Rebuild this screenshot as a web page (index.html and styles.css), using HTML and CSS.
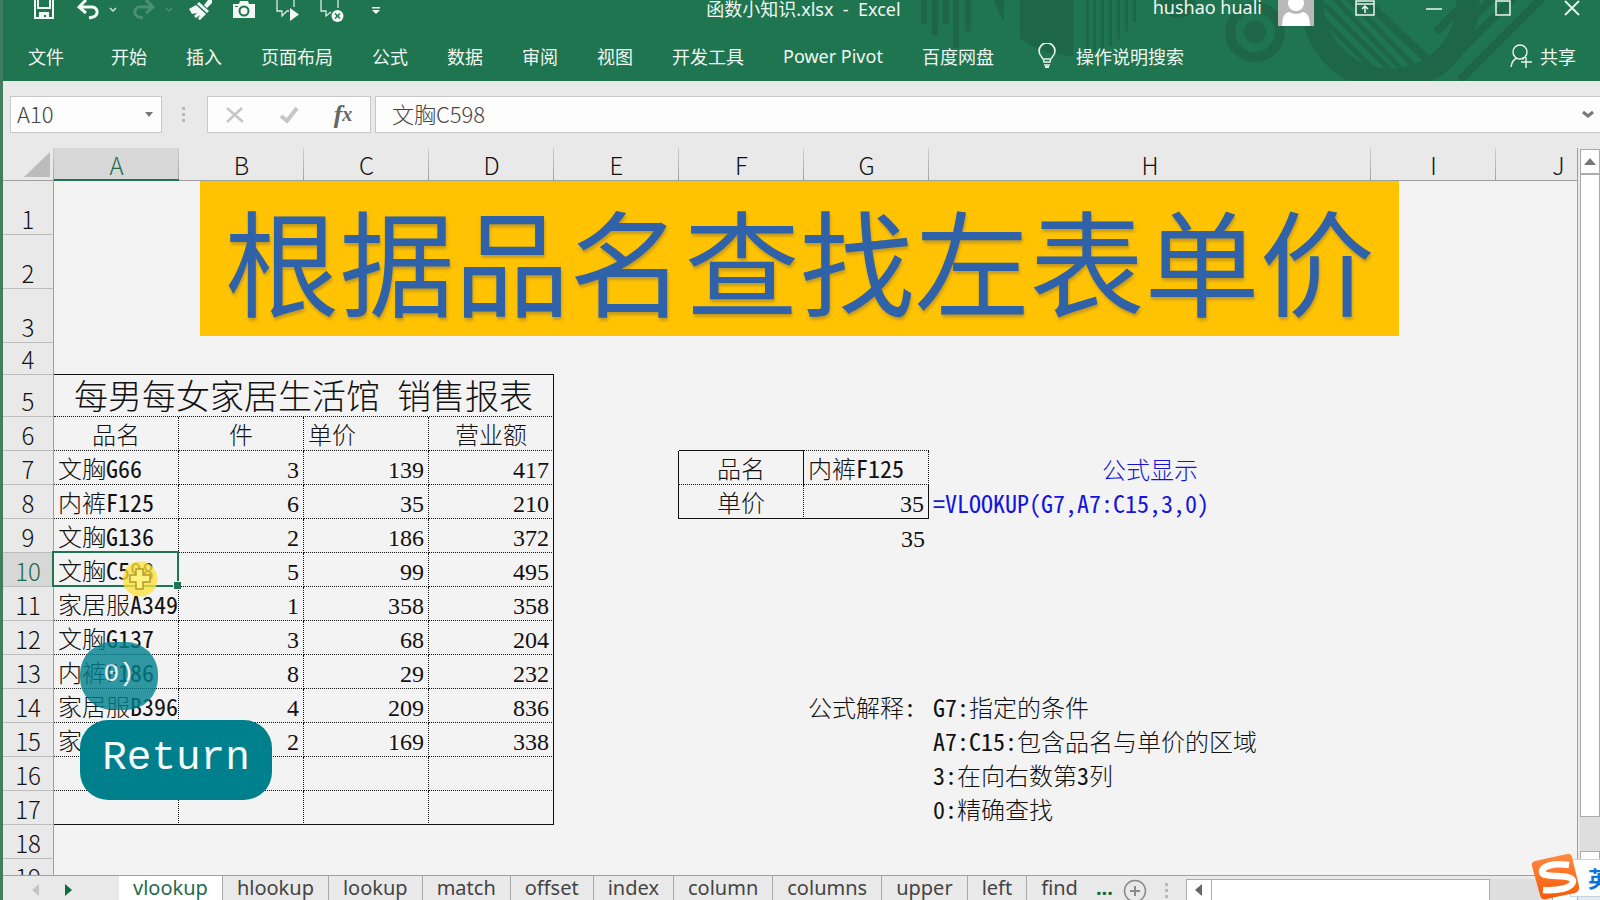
FILE: index.html
```html
<!DOCTYPE html>
<html lang="zh-CN">
<head>
<meta charset="utf-8">
<title>函数小知识.xlsx - Excel</title>
<link rel="stylesheet" href="styles.css">
</head>
<body>
<div class="app">
  <header class="top">
    <svg class="deco" viewBox="0 0 700 81" width="700" height="81" aria-hidden="true">
      <g fill="#1e6648">
        <path d="M21 0h6v24h-6zM32 0h6v35h-6zM43 0h6v24h-6zM53 0h6v48h-6zM65 0h6v31h-6z"/>
        <path d="M94 0h10v22q-6-10-10-22z"/>
        <path d="M120 0h53v56q-35-2-53-18z"/>
        <path d="M186 0h3v54h-3zM193 0h3v52h-3zM201 0h3v50h-3zM209 0h3v46h-3zM217 0h3v39h-3zM225 0h3v31h-3zM233 0h3v22h-3z"/>
        <circle cx="278" cy="0" r="18"/>
        <circle cx="355" cy="32" r="11"/>
      </g>
      <circle cx="355" cy="32" r="25" fill="none" stroke="#1e6648" stroke-width="10"/>
      <circle cx="490" cy="2" r="78" fill="none" stroke="#1e6648" stroke-width="23"/>
      <g stroke="#1e6648" fill="none">
        <path stroke-width="5" d="M420 16l58 58M424 4l68 68M432 -4l70 74M444 -6l70 72"/>
        <path stroke-width="8" d="M454 -10l78 74"/>
        <path stroke-width="8" d="M536 32l34-34M559 32l36-36M545 66l72-72M560 80l88-88"/>
      </g>
    </svg>
    <div class="titlebar">
      <div class="qat">
        <button class="tool" aria-label="保存"><svg width="20" height="20" viewBox="0 0 20 20"><path fill="none" stroke="#f2f8f5" stroke-width="2" d="M1 0v18h18V0M4 0v8h12V0"/><path fill="#f2f8f5" d="M5 12h10v7h-3v-4h-2v4H5z"/></svg></button>
        <button class="tool" aria-label="撤消"><svg width="22" height="20" viewBox="0 0 22 20"><path fill="none" stroke="#f2f8f5" stroke-width="3" d="M2 7h12a5 5 0 0 1 2 10l-4 1M9 0L2 7l7 6"/></svg></button>
        <button class="arrow" aria-label="撤消列表"><svg width="8" height="20" viewBox="0 0 8 20"><path fill="none" stroke="#cfe3d9" stroke-width="1.5" d="M1 8l3 3 3-3"/></svg></button>
        <button class="tool" aria-label="恢复"><svg width="22" height="20" viewBox="0 0 22 20"><path fill="none" stroke="#4b9072" stroke-width="3" d="M20 7H8a5 5 0 0 0-2 10l4 1M13 0l7 7-7 6"/></svg></button>
        <button class="arrow" aria-label="恢复列表"><svg width="8" height="20" viewBox="0 0 8 20"><path fill="none" stroke="#4b9072" stroke-width="1.5" d="M1 8l3 3 3-3"/></svg></button>
        <button class="tool" aria-label="格式刷"><svg width="24" height="20" viewBox="0 0 24 20"><path fill="#f2f8f5" d="M20 0h4v3l-5 5-3-3zM11 2l10 9-2 2L9 4zM8 5l10 9-6 6-2-1 2-4-4 3-2-2 3-3-5 1-3-5z"/></svg></button>
        <button class="tool" aria-label="照相机"><svg width="22" height="20" viewBox="0 0 22 20"><path fill="#f2f8f5" d="M6 4l1-3h8l1 3h6v14H0V4z"/><circle cx="11" cy="11" r="4.5" fill="none" stroke="#1f754f" stroke-width="2"/><path fill="#1f754f" d="M2 6h3v1H2z"/></svg></button>
        <button class="tool" aria-label="显示批注"><svg width="24" height="22" viewBox="0 0 24 22"><path fill="none" stroke="#dcebe4" stroke-width="1.3" d="M1 0v11h5v5l5-5h2M18 0v7"/><path fill="#f2f8f5" d="M14 8l9 6.500-9 6.500z"/></svg></button>
        <button class="tool" aria-label="删除批注"><svg width="24" height="22" viewBox="0 0 24 22"><path fill="none" stroke="#dcebe4" stroke-width="1.3" d="M1 0v11h5v5l5-4M18 0v8"/><circle cx="17.500" cy="16" r="6" fill="#f2f8f5"/><path stroke="#1f754f" stroke-width="1.500" d="M15 13.500l5 5M20 13.500l-5 5"/></svg></button>
        <button class="tool" aria-label="自定义快速访问工具栏"><svg width="8" height="20" viewBox="0 0 8 20"><path fill="#f2f8f5" d="M0 7h8v1.500H0zM0 10h8l-4 4z"/></svg></button>
      </div>
      <div class="doc-title">函数小知识.xlsx&nbsp; -&nbsp; Excel</div>
      <div class="account">
        <span class="user">hushao huali</span>
        <svg class="avatar" width="36" height="26" viewBox="0 0 36 26"><path fill="#b9b9b9" d="M0 0h36v26H0z"/><circle cx="18" cy="3" r="8" fill="#fff"/><path fill="#fff" d="M4 26q0-13 7-14 7 4 14 0 7 1 7 14z"/></svg>
        <button class="win" aria-label="功能区显示选项"><svg width="20" height="18" viewBox="0 0 20 18"><path fill="none" stroke="#eaf4ef" stroke-width="1.500" d="M1 1h18v14H1zM1 4h18M10 13V7M7 9l3-3 3 3"/></svg></button>
        <button class="win" aria-label="最小化"><svg width="16" height="18" viewBox="0 0 16 18"><path stroke="#eaf4ef" stroke-width="1.500" d="M0 9h16"/></svg></button>
        <button class="win" aria-label="最大化"><svg width="16" height="18" viewBox="0 0 16 18"><path fill="none" stroke="#eaf4ef" stroke-width="1.500" d="M1 1h14v14H1z"/></svg></button>
        <button class="win" aria-label="关闭"><svg width="16" height="18" viewBox="0 0 16 18"><path stroke="#eaf4ef" stroke-width="1.800" d="M1 1l14 14M15 1L1 15"/></svg></button>
      </div>
    </div>
    <nav class="ribbon">
      <button class="file">文件</button>
      <button>开始</button>
      <button>插入</button>
      <button>页面布局</button>
      <button>公式</button>
      <button>数据</button>
      <button>审阅</button>
      <button>视图</button>
      <button>开发工具</button>
      <button>Power Pivot</button>
      <button>百度网盘</button>
      <button class="tell"><svg width="18" height="26" viewBox="0 0 18 26"><path fill="none" stroke="#eaf4ef" stroke-width="1.600" d="M6 19c0-5-5-5-5-11a8 8 0 0 1 16 0c0 6-5 6-5 11zM6 16h6M6 22h6"/><path fill="#eaf4ef" d="M7 23h4v2H7z"/></svg>操作说明搜索</button>
      <button class="share"><svg width="22" height="24" viewBox="0 0 22 24"><circle cx="10" cy="8" r="7" fill="none" stroke="#eaf4ef" stroke-width="1.400"/><path fill="none" stroke="#eaf4ef" stroke-width="1.400" d="M1 23q1-7 6-9M12 14l2 1M16 13v11M11 18h11"/></svg>共享</button>
    </nav>
  </header>

  <div class="formula-bar">
    <div class="name-box">
      <input aria-label="名称框" value="A10">
      <button aria-label="名称列表"><svg width="8" height="5" viewBox="0 0 8 5"><path fill="#777" d="M0 0h8L4 5z"/></svg></button>
    </div>
    <svg class="grip" width="4" height="16" viewBox="0 0 4 16"><path fill="#b8b8b8" d="M0 0h3v3H0zM0 6h3v3H0zM0 12h3v3H0z"/></svg>
    <div class="fx-box">
      <button aria-label="取消"><svg width="18" height="16" viewBox="0 0 18 16"><path stroke="#c6c6c6" stroke-width="2.500" d="M1 1l16 14M16 1L1 15"/></svg></button>
      <button aria-label="输入"><svg width="20" height="18" viewBox="0 0 20 18"><path fill="none" stroke="#c6c6c6" stroke-width="4" d="M2 10l6 5L18 2"/></svg></button>
      <button class="fx" aria-label="插入函数">f<small>x</small></button>
    </div>
    <div class="formula">
      <input aria-label="编辑栏" value="文胸C598">
      <button aria-label="展开编辑栏"><svg width="12" height="9" viewBox="0 0 12 9"><path fill="none" stroke="#777" stroke-width="3" d="M1 2l5 4 5-4"/></svg></button>
    </div>
  </div>

  <main class="work">
    <div class="sheet">
      <table class="grid">
        <colgroup><col class="c-num"><col><col><col><col><col><col><col><col class="c-wide"><col><col></colgroup>
        <thead>
          <tr><th class="corner"><svg width="26" height="25" viewBox="0 0 26 25"><path fill="#bcbcbc" d="M26 0v25H0z"/></svg></th><th class="on">A</th><th>B</th><th>C</th><th>D</th><th>E</th><th>F</th><th>G</th><th>H</th><th>I</th><th>J</th></tr>
        </thead>
        <tbody>
          <tr class="tall"><th>1</th><td colspan="10"></td></tr>
          <tr class="tall"><th>2</th><td colspan="10"></td></tr>
          <tr class="tall"><th>3</th><td colspan="10"></td></tr>
          <tr class="short"><th>4</th><td colspan="4" class="bb"></td><td colspan="6"></td></tr>
          <tr class="head"><th>5</th><td colspan="4" class="caption db rb">每男每女家居生活馆&nbsp; 销售报表</td><td colspan="6"></td></tr>
          <tr><th>6</th><td class="mid dr db">品名</td><td class="mid dr db">件</td><td class="dr db">单价</td><td class="mid rb db">营业额</td><td></td><td class="bb"></td><td class="db"></td><td></td><td></td><td></td></tr>
          <tr><th>7</th><td class="dr db">文胸<span class="code">G66</span></td><td class="num dr db">3</td><td class="num dr db">139</td><td class="num rb db">417</td><td class="rb"></td><td class="mid rb db">品名</td><td class="dr db">内裤<span class="code">F125</span></td><td class="mid blue">公式显示</td><td></td><td></td></tr>
          <tr><th>8</th><td class="dr db">内裤<span class="code">F125</span></td><td class="num dr db">6</td><td class="num dr db">35</td><td class="num rb db">210</td><td class="rb"></td><td class="mid dr bb">单价</td><td class="num rb bb">35</td><td class="blue"><span class="code">=VLOOKUP(G7,A7:C15,3,0)</span></td><td></td><td></td></tr>
          <tr><th>9</th><td class="dr db">文胸<span class="code">G136</span></td><td class="num dr db">2</td><td class="num dr db">186</td><td class="num rb db">372</td><td></td><td></td><td class="num">35</td><td></td><td></td><td></td></tr>
          <tr><th class="on">10</th><td class="dr db active">文胸<span class="code">C598</span><span class="selection"></span><svg class="cursor" width="36" height="36" viewBox="0 0 36 36"><circle cx="18" cy="18" r="17.500" fill="#ffe23c" fill-opacity=".78"/><path fill="#fff27e" stroke="#b39b2c" stroke-width="1.500" d="M14 8h7v6h7v7h-7v7h-7v-7H8v-7h6z"/></svg></td><td class="num dr db">5</td><td class="num dr db">99</td><td class="num rb db">495</td><td></td><td></td><td></td><td></td><td></td><td></td></tr>
          <tr><th>11</th><td class="dr db">家居服<span class="code">A349</span></td><td class="num dr db">1</td><td class="num dr db">358</td><td class="num rb db">358</td><td></td><td></td><td></td><td></td><td></td><td></td></tr>
          <tr><th>12</th><td class="dr db">文胸<span class="code">G137</span></td><td class="num dr db">3</td><td class="num dr db">68</td><td class="num rb db">204</td><td></td><td></td><td></td><td></td><td></td><td></td></tr>
          <tr><th>13</th><td class="dr db">内裤<span class="code">F186</span></td><td class="num dr db">8</td><td class="num dr db">29</td><td class="num rb db">232</td><td></td><td></td><td></td><td></td><td></td><td></td></tr>
          <tr><th>14</th><td class="dr db">家居服<span class="code">B396</span></td><td class="num dr db">4</td><td class="num dr db">209</td><td class="num rb db">836</td><td></td><td></td><td>公式解释<span class="code">:</span></td><td><span class="code">G7:</span>指定的条件</td><td></td><td></td></tr>
          <tr><th>15</th><td class="dr db">家</td><td class="num dr db">2</td><td class="num dr db">169</td><td class="num rb db">338</td><td></td><td></td><td></td><td><span class="code">A7:C15:</span>包含品名与单价的区域</td><td></td><td></td></tr>
          <tr><th>16</th><td class="dr db"></td><td class="dr db"></td><td class="dr db"></td><td class="rb db"></td><td></td><td></td><td></td><td><span class="code">3:</span>在向右数第<span class="code">3</span>列</td><td></td><td></td></tr>
          <tr><th>17</th><td class="dr bb"></td><td class="dr bb"></td><td class="dr bb"></td><td class="rb bb"></td><td></td><td></td><td></td><td><span class="code">0:</span>精确查找</td><td></td><td></td></tr>
          <tr><th>18</th><td colspan="10"></td></tr>
          <tr><th>19</th><td colspan="10"></td></tr>
        </tbody>
      </table>
      <div class="banner">根据品名查找左表单价</div>
      <div class="key key-fading">0)</div>
      <div class="key key-return">Return</div>
    </div>
    <div class="vscroll">
      <button aria-label="向上滚动"><svg width="12" height="7" viewBox="0 0 12 7"><path fill="#777" d="M6 0l6 7H0z"/></svg></button>
      <div class="vthumb"></div>
      <div class="vtrack"></div>
      <button aria-label="向下滚动"></button>
    </div>
  </main>

  <footer class="tabs">
    <div class="tab-nav">
      <button aria-label="上一张"><svg width="7" height="12" viewBox="0 0 7 12"><path fill="#c4c4c4" d="M7 0v12L0 6z"/></svg></button>
      <button aria-label="下一张"><svg width="7" height="12" viewBox="0 0 7 12"><path fill="#0f6b41" d="M0 0v12l7-6z"/></svg></button>
    </div>
    <button class="tab current">vlookup</button>
    <button class="tab">hlookup</button>
    <button class="tab">lookup</button>
    <button class="tab">match</button>
    <button class="tab">offset</button>
    <button class="tab">index</button>
    <button class="tab">column</button>
    <button class="tab">columns</button>
    <button class="tab">upper</button>
    <button class="tab">left</button>
    <button class="tab last">find</button>
    <button class="more">...</button>
    <button class="add" aria-label="新工作表"><svg width="24" height="24" viewBox="0 0 24 24"><circle cx="12" cy="12" r="10.500" fill="none" stroke="#8a8a8a" stroke-width="1.500"/><path stroke="#8a8a8a" stroke-width="2" d="M7 12h10M12 7v10"/></svg></button>
    <svg class="grip" width="4" height="16" viewBox="0 0 4 16"><path fill="#b8b8b8" d="M0 0h3v3H0zM0 6h3v3H0zM0 12h3v3H0z"/></svg>
    <div class="hscroll">
      <button aria-label="向左滚动"><svg width="7" height="12" viewBox="0 0 7 12"><path fill="#666" d="M7 0v12L0 6z"/></svg></button>
      <div class="hthumb"></div>
      <div class="htrack"></div>
      <button aria-label="向右滚动"></button>
    </div>
  </footer>

  <div class="ime">
    <svg class="ime-logo" width="50" height="50" viewBox="0 0 50 50"><defs><linearGradient id="o" x1="0" y1="0" x2="0" y2="1"><stop offset="0" stop-color="#ff8a45"/><stop offset="1" stop-color="#f65a05"/></linearGradient></defs><path fill="url(#o)" d="M4 9L36 2q4-1 5 3l7 29q1 5-4 7L15 47q-5 1-6-4L1 14q-1-4 3-5z"/><path fill="none" stroke="#fff" stroke-width="6.500" d="M38 13C22 11 11 14 11 20c0 7 30 1 31 9 0 7-15 10-30 9"/></svg>
    <span class="ime-mode">英</span>
  </div>
</div>
</body>
</html>
```
FILE: styles.css
```css
* { box-sizing: border-box; }

body {
  margin: 0;
  background: #e9e9e9;
  font-family: "Noto Sans", "Noto Sans CJK SC", sans-serif;
}

button, input {
  margin: 0;
  padding: 0;
  border: 0;
  background: none;
  font: inherit;
  color: inherit;
}

button { display: flex; align-items: center; justify-content: center; }
svg { display: block; flex: none; }

.app {
  position: relative;
  display: flex;
  flex-direction: column;
  height: 100vh;
  overflow: hidden;
  border-left: 3px solid #3f7d5c;
}

/* Title bar and ribbon */
.top {
  position: relative;
  flex: none;
  overflow: hidden;
  background: #1f754f;
  color: #f0f7f3;
  font-size: 18px;
}

.deco { position: absolute; top: 0; right: 0; }

.titlebar {
  position: relative;
  display: grid;
  grid-template-columns: 1fr auto 1fr;
  height: 34px;
  line-height: 18px;
}

.doc-title { padding-left: 4px; }
.qat { display: flex; align-items: flex-start; padding-left: 16px; }
.tool { width: 38px; margin-left: 6px; }
.arrow { width: 12px; }

.account {
  display: flex;
  align-items: flex-start;
  justify-content: flex-end;
  margin-right: -6px;
}

.user { line-height: 14px; }
.avatar { margin: 0 16px; }
.win { width: 69px; }

.ribbon {
  position: relative;
  display: flex;
  align-items: center;
  gap: 39px;
  height: 47px;
  padding: 0 24px 4px 25px;
  white-space: nowrap;
}

.file { margin-right: 8px; }
.tell { gap: 20px; margin-left: 5px; }
.share { gap: 8px; margin-left: auto; }

/* Formula bar */
.formula-bar {
  display: flex;
  flex: none;
  align-items: center;
  height: 67px;
  padding: 0 0 0 7px;
  color: #444;
  font-family: "Noto Sans CJK SC", sans-serif;
  font-size: 22px;
  font-weight: 300;
}

.name-box, .fx-box, .formula {
  display: flex;
  align-items: center;
  height: 37px;
  border: 1px solid #c8c8c8;
  background: #fdfdfd;
}

.name-box { width: 152px; padding: 0 8px 0 6px; }
.formula-bar input { flex: 1; min-width: 0; padding-bottom: 4px; }
.grip { margin: 0 21px 0 20px; }
.fx-box { width: 164px; margin-right: 4px; }
.fx-box button { flex: 1; }
.fx { color: #666; font: italic bold 26px "Liberation Serif", serif; }
.fx small { font-size: 20px; }
.formula { flex: 1; padding: 0 6px 0 16px; border-right: 0; }

/* Worksheet */
.work { display: flex; flex: 1; min-height: 0; }

.sheet {
  position: relative;
  flex: 1;
  min-width: 0;
  overflow: hidden;
  border-right: 1px solid #9f9f9f;
  border-bottom: 1px solid #9f9f9f;
  background: #f3f3f3;
}

.grid {
  width: 1618px;
  table-layout: fixed;
  border-collapse: separate;
  border-spacing: 0;
  color: #111;
  font-family: "Liberation Serif", "Noto Sans CJK SC", serif;
  font-size: 24px;
  font-weight: 300;
  line-height: 28px;
}

.grid col { width: 125px; }
.grid .c-num { width: 51px; }
.grid .c-wide { width: 442px; }

.grid th {
  padding: 0;
  font-family: "Noto Sans CJK SC", sans-serif;
  font-weight: 300;
  line-height: 30px;
  text-align: center;
  vertical-align: bottom;
}

.grid thead th {
  height: 33px;
  border-bottom: 1px solid #9f9f9f;
  background: linear-gradient(#d0d0d0, #a0a0a0) right / 1px 100% no-repeat #e9e9e9;
}

.grid thead .corner { padding: 0 4px 3px 0; }
.corner svg { margin-left: auto; }

.grid thead .on {
  border-bottom: 2px solid #1f754f;
  background-color: #d7d7d7;
  color: #1f6b4a;
  line-height: 28px;
}

.grid tbody th {
  border-right: 1px solid #9f9f9f;
  border-bottom: 1px solid #bdbdbd;
  background: #e9e9e9;
}

.grid tbody .on { background: #d7d7d7; color: #1f6b4a; }

.grid tbody tr { height: 34px; }
.grid tbody .tall { height: 54px; }
.grid tbody .short { height: 32px; }
.grid tbody .head { height: 42px; }

.grid td {
  padding: 0 4px 0 4px;
  border: 0 solid #111;
  vertical-align: bottom;
  white-space: nowrap;
}

.grid .bb { border-bottom: 1px solid #111; }
.grid .rb { border-right: 1px solid #111; }
.grid .db { border-bottom: 1px dotted #111; }
.grid .dr { border-right: 1px dotted #111; }
.grid .mid { text-align: center; }
.grid .num { text-align: right; }
.grid .blue { color: #1414dc; }
.grid .caption { font-size: 34px; line-height: 36px; text-align: center; }
.code { font-family: "Noto Sans Mono CJK SC", "Liberation Mono", monospace; line-height: 20px; }

.active { position: relative; }

.selection {
  position: absolute;
  inset: -2px -1px -1px -2px;
  border: 2px solid #1f754f;
}

.selection::after {
  position: absolute;
  right: -4px;
  bottom: -4px;
  width: 7px;
  height: 7px;
  border: 1px solid #f3f3f3;
  border-width: 1px 0 0 1px;
  background: #1f754f;
  content: "";
}

.cursor { position: absolute; top: 8px; left: 68px; }

.banner {
  position: absolute;
  top: 33px;
  left: 197px;
  width: 1199px;
  height: 155px;
  background: #ffc303;
  color: #2f62a8;
  font-family: "Noto Sans CJK SC", sans-serif;
  font-size: 115px;
  font-weight: 400;
  line-height: 155px;
  text-align: center;
  text-shadow: 1px 3px 3px #c89c1c;
  white-space: nowrap;
}

.key {
  position: absolute;
  left: 77px;
  background: #00808d;
  color: #f4fbfb;
  font-family: "Liberation Mono", monospace;
  text-align: center;
}

.key-fading {
  top: 494px;
  width: 78px;
  height: 68px;
  border-radius: 32px;
  font-size: 26px;
  line-height: 64px;
  opacity: .8;
}

.key-return {
  top: 572px;
  width: 192px;
  height: 80px;
  border-radius: 28px;
  font-size: 41px;
  line-height: 76px;
}

/* Scroll bars */
.vscroll {
  display: flex;
  flex: none;
  flex-direction: column;
  width: 22px;
  padding: 1px 0 0 2px;
}

.vscroll button { height: 25px; border: 1px solid #ababab; background: #fff; }
.vthumb { flex: 1; border: 1px solid #ababab; background: #fff; }
.vtrack { height: 34px; background: #dedede; }

/* Sheet tabs */
.tabs {
  display: flex;
  flex: none;
  height: 24px;
  overflow: hidden;
  color: #444;
  font-size: 20px;
  line-height: 24px;
}

.tab-nav { display: flex; gap: 26px; width: 116px; padding: 4px 0 0 29px; }
.tab { padding: 0 14px; border-right: 1px solid #a8a8a8; }
.tab.current { background: #fff; color: #1f6b4a; }
.tab.last { border-right: 0; }
.more { padding: 0 10px 0 4px; color: #0f6b41; font-weight: 700; }
.add { height: 30px; }
.tabs .grip { align-self: center; margin: 6px 17px 0 18px; }
.hscroll { display: flex; flex: 1; margin-right: 22px; padding-top: 3px; }
.hscroll button { width: 26px; border: 1px solid #ababab; border-bottom: 0; background: #fff; }
.hthumb { flex: 9; border: 1px solid #ababab; border-width: 1px 1px 0 0; background: #fff; }
.htrack { flex: 2; background: #dedede; }

/* Input method badge */
.ime {
  position: absolute;
  right: 0;
  bottom: 3px;
  display: flex;
  align-items: center;
  width: 30px;
  height: 38px;
  padding-left: 17px;
  border: 1px solid #c5d3e6;
  border-right: 0;
  background: #fdfdfe;
}

.ime-logo { position: absolute; top: -8px; left: -40px; }
.ime-mode { width: 12px; overflow: hidden; color: #0a74da; font-size: 22px; font-weight: 700; line-height: 30px; white-space: nowrap; }
```
